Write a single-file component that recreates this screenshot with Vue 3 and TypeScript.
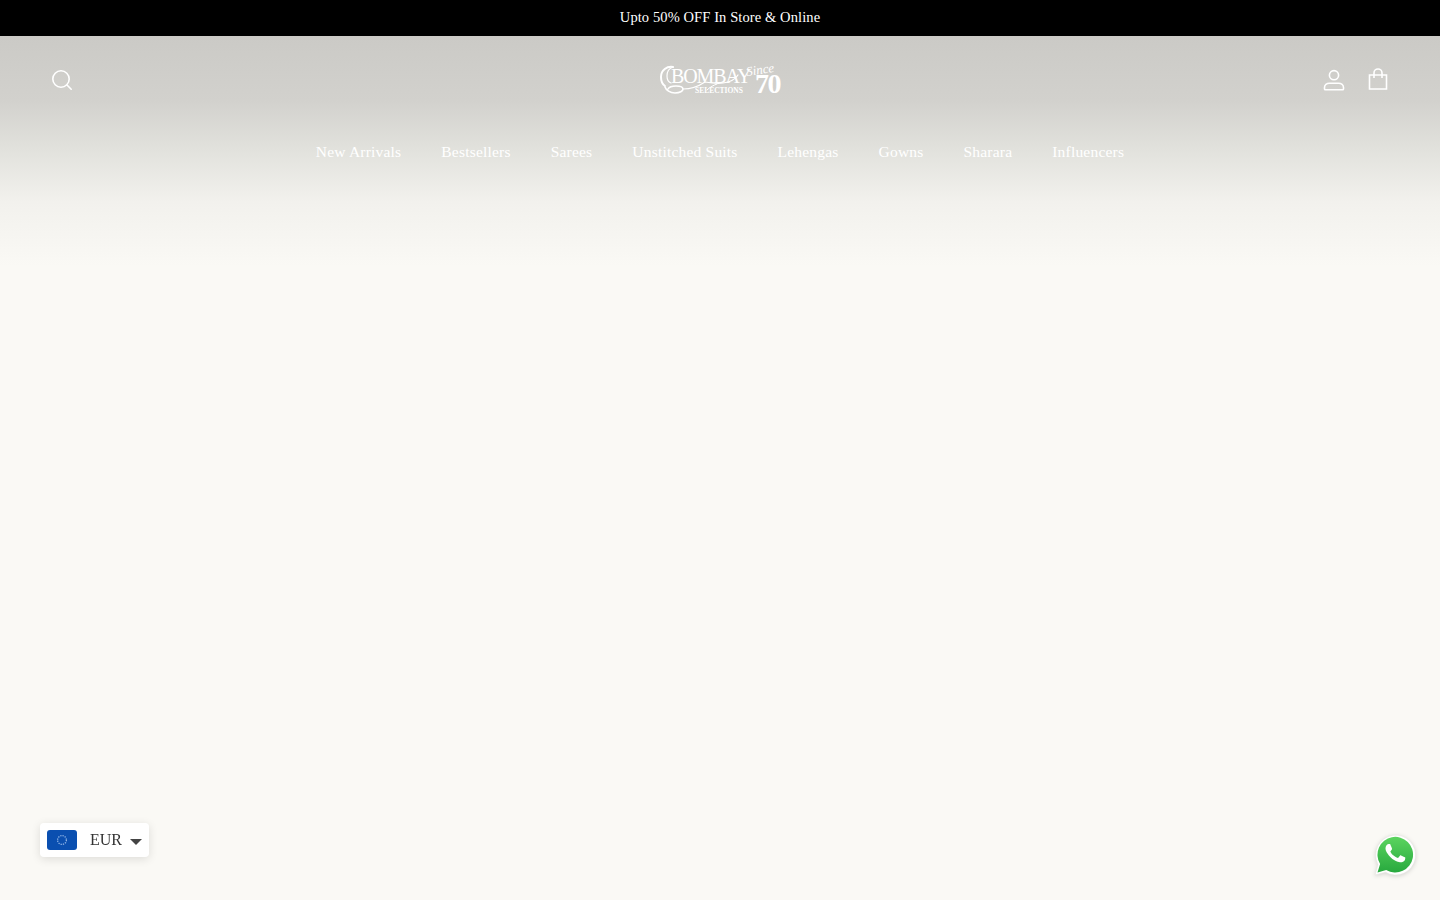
<script setup lang="ts">
const navLinks = ['New Arrivals', 'Bestsellers', 'Sarees', 'Unstitched Suits', 'Lehengas', 'Gowns', 'Sharara', 'Influencers']
</script>

<template>
  <div class="page">
    <div class="announcement">Upto 50% OFF In Store &amp; Online</div>

    <header class="site-header">
      <div class="header-top">
        <a class="icon-link" href="#" aria-label="Search">
          <svg width="24" height="24" viewBox="0 0 24 24" fill="none" stroke="currentColor" stroke-width="1.6" stroke-linecap="round">
            <circle cx="11" cy="11" r="8.2" />
            <path d="M17 17l4.2 4.2" />
          </svg>
        </a>

        <a class="logo" href="#" aria-label="Bombay Selections">
          <svg class="logo-swirl" width="122" height="34" viewBox="0 0 122 34" fill="none" stroke="currentColor" stroke-linecap="round">
            <path d="M14 4C8 3 2 7 2 14c0 4 1 7 4 9" stroke-width="2" />
            <path d="M14 4c-3 1-6 4-6 9 0 3 1 6 4 7" stroke-width="1.2" />
            <path d="M6 24c1 3 5 6 10 6 5 0 8-2 8-4 0-2-3-3-7-3-4 0-7 1-8 3" stroke-width="1.6" />
            <path d="M24 26c8 0 16-3 22-7 6 1 12 2 18 1 7-1 12-3 15-8" stroke-width="1.2" />
            <path d="M58 21c-3 1-7 3-10 6" stroke-width="1" />
          </svg>
          <span class="logo-name">BOMBAY</span>
          <span class="logo-sub">SELECTIONS</span>
          <span class="logo-since">Since</span>
          <span class="logo-year">70</span>
        </a>

        <div class="header-actions">
          <a class="icon-link" href="#" aria-label="Account">
            <svg width="24" height="24" viewBox="0 0 24 24" fill="none" stroke="currentColor" stroke-width="1.6">
              <circle cx="12" cy="7.200" r="4.600" />
              <path d="M2.500 21v-1.400c0-2.600 2.200-4.300 5-4.300h9c2.800 0 5 1.700 5 4.300V21c0 .5-.3.800-.8.800H3.300c-.5 0-.8-.3-.8-.8z" />
            </svg>
          </a>
          <a class="icon-link" href="#" aria-label="Cart">
            <svg width="24" height="24" viewBox="0 0 24 24" fill="none" stroke="currentColor" stroke-width="1.6">
              <path d="M3.500 7h17v14h-17z" />
              <path d="M8 10V5a4 4 0 0 1 8 0v5" />
            </svg>
          </a>
        </div>
      </div>

      <nav class="main-nav">
        <a v-for="link in navLinks" :key="link" href="#">{{ link }}</a>
      </nav>
    </header>

    <button class="currency" type="button">
      <svg class="flag" width="30" height="20" viewBox="0 0 30 20">
        <rect width="30" height="20" rx="3" fill="#0a4fb0" />
        <circle cx="15" cy="10" r="4.400" fill="none" stroke="#8fb4e6" stroke-width="1.300" stroke-dasharray="1.300 1" />
      </svg>
      <span>EUR</span>
      <span class="caret"></span>
    </button>

    <a class="whatsapp" href="#" aria-label="WhatsApp">
      <svg width="44" height="44" viewBox="0 0 44 44">
        <defs>
          <linearGradient id="wa-green" x1="0" y1="0" x2="0" y2="1">
            <stop offset="0" stop-color="#5bd45f" />
            <stop offset="1" stop-color="#28a93e" />
          </linearGradient>
        </defs>
        <path d="M2 42l3-10.500A20 20 0 1 1 12.500 39.300z" fill="#fff" stroke="#e4e4df" stroke-width=".6" />
        <path d="M4.500 39.500l2.600-8.500A17.800 17.800 0 1 1 13.200 37z" fill="url(#wa-green)" />
        <path d="M16.300 11.800c-.5-1.100-1-1.100-1.500-1.100h-1.300c-.5 0-1.200.2-1.800.9-.6.7-2.400 2.300-2.400 5.600s2.400 6.500 2.800 7c.3.400 4.700 7.500 11.600 10.200 5.700 2.300 6.900 1.800 8.100 1.700 1.200-.1 4-1.600 4.500-3.200.6-1.600.6-2.900.4-3.200-.2-.3-.6-.5-1.300-.8-.7-.4-4-2-4.600-2.200-.6-.2-1.100-.3-1.500.4-.5.700-1.800 2.200-2.200 2.700-.4.500-.8.500-1.500.2-.7-.4-2.900-1.100-5.500-3.400-2-1.800-3.400-4-3.800-4.700-.4-.7 0-1.100.3-1.400.3-.3.700-.8 1-1.200.3-.4.500-.7.700-1.100.2-.5.100-.9 0-1.200-.2-.4-1.500-3.700-2.100-5z" fill="#fff" transform="translate(5.800 3.200) scale(.72)" />
      </svg>
    </a>
  </div>
</template>

<style>
html,
body {
  margin: 0;
  background: #faf9f5;
}
</style>

<style scoped>
.page {
  min-height: 900px;
  display: flex;
  flex-direction: column;
  background: #faf9f5;
  font-family: 'Liberation Serif', 'Times New Roman', serif;
  overflow: hidden;
}

a {
  color: inherit;
  text-decoration: none;
}

.announcement {
  height: 36px;
  line-height: 35px;
  flex: none;
  background: #000;
  color: #fff;
  font-size: 14.500px;
  letter-spacing: 0.1px;
  text-align: center;
}

.site-header {
  height: 230px;
  flex: none;
  box-sizing: border-box;
  padding: 24px 40px 0;
  color: #fff;
  background: linear-gradient(to bottom, #cbcac6 0%, #d2d1cd 28%, #e2e2dd 50%, #f2f1ed 72%, #faf9f5 100%);
}

.header-top {
  display: grid;
  grid-template-columns: 1fr auto 1fr;
  align-items: center;
  height: 40px;
}

.icon-link {
  display: flex;
  width: 44px;
  height: 40px;
  align-items: center;
  justify-content: center;
}

.header-actions {
  display: flex;
  justify-self: end;
}

.logo {
  position: relative;
  display: block;
  width: 122px;
  height: 34px;
}

.logo-swirl {
  position: absolute;
  left: 0;
  top: 0;
}

.logo-name,
.logo-sub,
.logo-since,
.logo-year {
  position: absolute;
  white-space: nowrap;
}

.logo-name {
  left: 12px;
  top: 3px;
  font-size: 20px;
  letter-spacing: -1.1px;
  line-height: 20px;
}

.logo-sub {
  left: 36px;
  top: 23px;
  font-size: 7.500px;
  font-weight: 700;
  line-height: 9px;
}

.logo-since {
  left: 87px;
  top: 0;
  font-size: 13px;
  font-style: italic;
  line-height: 14px;
  transform: rotate(-8deg);
}

.logo-year {
  left: 96px;
  top: 7px;
  font-size: 28px;
  font-weight: 700;
  letter-spacing: -1.500px;
  line-height: 28px;
}

.main-nav {
  display: flex;
  justify-content: center;
  gap: 40px;
  margin-top: 42px;
  font-size: 15.500px;
  line-height: 20px;
  letter-spacing: 0.2px;
  color: #fff;
}

.currency {
  position: fixed;
  left: 40px;
  top: 823px;
  width: 109px;
  height: 34px;
  box-sizing: border-box;
  padding: 0 7px;
  display: flex;
  align-items: center;
  border: 0;
  border-radius: 4px;
  background: #fff;
  box-shadow: 0 2px 10px rgba(0, 0, 0, 0.12);
  color: #333;
  font-family: inherit;
  font-size: 16px;
}

.flag {
  flex: none;
  margin-right: 13px;
}

.caret {
  margin: 4px 0 0 8px;
  border-left: 6px solid transparent;
  border-right: 6px solid transparent;
  border-top: 6px solid #444;
}

.whatsapp {
  position: fixed;
  left: 1373px;
  top: 833px;
  width: 44px;
  height: 44px;
  filter: drop-shadow(0 1px 2px rgba(0, 0, 0, 0.15));
}
</style>
